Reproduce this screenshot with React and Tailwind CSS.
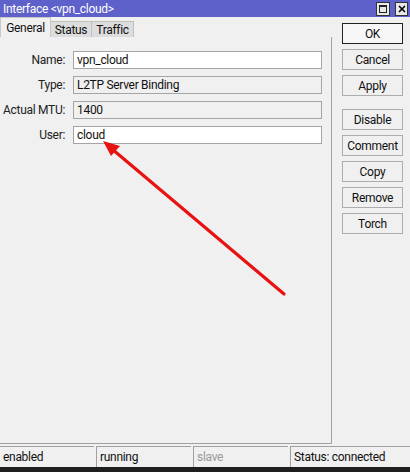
import { X } from 'lucide-react';

const font = { fontFamily: 'Roboto, "Liberation Sans", Arial, sans-serif' };

function Field({ label, value, readOnly }) {
  return (
    <div className="flex items-center h-[18px]">
      <div className="w-[68px] text-right pr-[3px] whitespace-nowrap text-[12px] text-[#222]">{label}</div>
      <div
        className={`ml-[5px] w-[249px] h-[18px] border border-[#a5a5a5] px-[3px] flex items-center text-[12px] text-[#111] ${
          readOnly ? 'bg-[#f0f0f0]' : 'bg-white'
        }`}
      >
        {value}
      </div>
    </div>
  );
}

function Btn({ children, primary }) {
  return (
    <div
      className={`w-[61px] h-[21px] flex items-center justify-center text-[12px] text-[#111] ${
        primary ? 'border border-[#222] bg-[#f7f7f7]' : 'border border-[#adadad] bg-[#f0f0f0]'
      }`}
    >
      {children}
    </div>
  );
}

export default function App() {
  return (
    <div
      className="relative w-[410px] h-[472px] bg-[#f0f0f0] overflow-hidden flex flex-col tracking-[-0.3px]"
      style={font}
    >
      {/* Title bar */}
      <div className="h-[17px] bg-[#5d61c9] flex items-center pl-[3px] pr-[2px]">
        <span className="text-white text-[12px] leading-none">Interface &lt;vpn_cloud&gt;</span>
        <div className="ml-auto flex gap-[5px]">
          <div className="w-[14px] h-[14px] bg-[#e8e8e8] border border-[#333] flex items-center justify-center">
            <div className="w-[8px] h-[8px] border border-[#222] border-t-2"></div>
          </div>
          <div className="w-[13px] h-[14px] bg-[#e8e8e8] border border-[#333] flex items-center justify-center">
            <X className="w-[10px] h-[10px] text-black" strokeWidth={4} />
          </div>
        </div>
      </div>

      <div className="flex flex-1">
        {/* Tabs + panel */}
        <div className="w-[332px] flex flex-col">
          <div className="h-[20px] flex items-end">
            <div className="h-[20px] w-[51px] border border-b-0 border-[#c8c8c8] bg-[#f0f0f0] flex items-center justify-center text-[12px] text-[#111]">
              General
            </div>
            <div className="h-[16px] w-[41px] border border-l-0 border-b-0 border-[#c0c0c0] bg-[#dddddd] flex items-center justify-center text-[12px] text-[#111]">
              Status
            </div>
            <div className="h-[16px] w-[42px] border border-l-0 border-b-0 border-[#c0c0c0] bg-[#dddddd] flex items-center justify-center text-[12px] text-[#111]">
              Traffic
            </div>
          </div>
          <div className="flex-1 border-r border-b border-[#a0a0a0] flex flex-col gap-[7px] pt-[14px]">
            <Field label="Name:" value="vpn_cloud" />
            <Field label="Type:" value="L2TP Server Binding" readOnly />
            <Field label="Actual MTU:" value="1400" readOnly />
            <Field label="User:" value="cloud" />
          </div>
        </div>

        {/* Buttons */}
        <div className="flex flex-col pl-[10px] pt-[6px]">
          <div className="flex flex-col gap-[5px]">
            <Btn primary>OK</Btn>
            <Btn>Cancel</Btn>
            <Btn>Apply</Btn>
          </div>
          <div className="flex flex-col gap-[5px] mt-[13px]">
            <Btn>Disable</Btn>
            <Btn>Comment</Btn>
            <Btn>Copy</Btn>
            <Btn>Remove</Btn>
            <Btn>Torch</Btn>
          </div>
        </div>
      </div>

      {/* Status bar */}
      <div className="mt-[2px] h-[21px] flex text-[12px]">
        <div className="w-[94px] border-t border-[#a0a0a0] pl-[3px] flex items-center text-[#111]">enabled</div>
        <div className="ml-[2px] w-[95px] border-t border-l border-[#a0a0a0] pl-[3px] flex items-center text-[#111]">running</div>
        <div className="ml-[2px] w-[95px] border-t border-l border-[#a0a0a0] pl-[3px] flex items-center text-[#9a9a9a]">slave</div>
        <div className="ml-[2px] flex-1 border-t border-l border-[#a0a0a0] pl-[3px] flex items-center text-[#111]">Status: connected</div>
      </div>
      <div className="h-[5px] bg-[#1e1e1e]"></div>

      {/* Annotation arrow */}
      <svg className="absolute left-0 top-0 pointer-events-none" width="410" height="472">
        <line x1="284" y1="294" x2="112" y2="149" stroke="#e81212" strokeWidth="3.2" strokeLinecap="round" />
        <polygon points="103,141 120,146 111,156" fill="#e81212" />
      </svg>
    </div>
  );
}
